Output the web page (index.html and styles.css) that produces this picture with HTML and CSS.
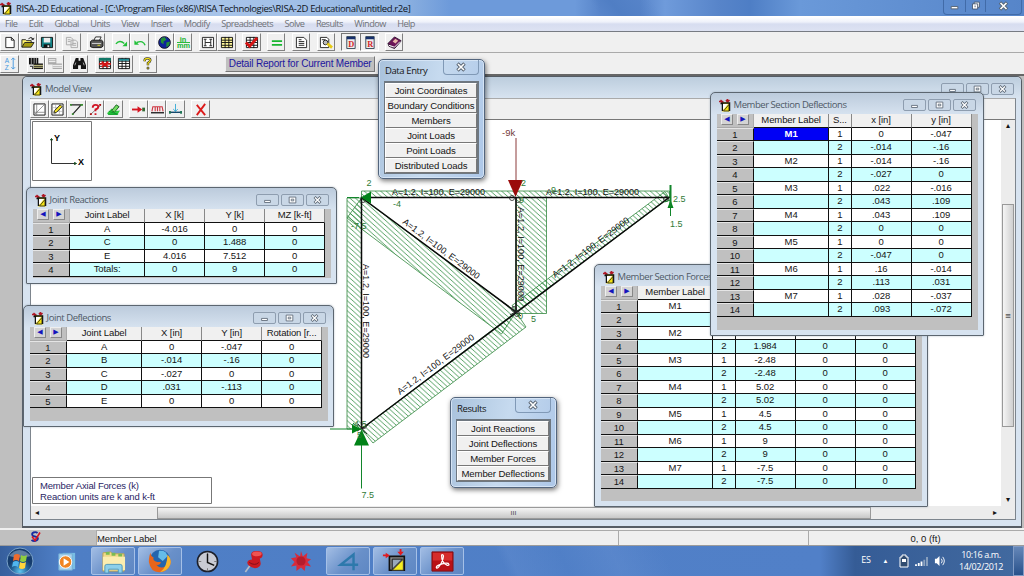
FILE: index.html
```html
<!DOCTYPE html>
<html lang="en">
<head>
<meta charset="utf-8">
<title>RISA-2D Educational</title>
<link rel="stylesheet" href="styles.css">
</head>
<body>
<svg class="defs" width="0" height="0">
  <symbol id="app" viewBox="0 0 12 13"><path d="M0 2.500h3M8.500 0v3M1.500 1l2.500 2-2 1M7 1l1.500 2 2-2" stroke="#b01826" stroke-width="1.500" fill="none"/><path d="M3 3.500h8v9H3z" fill="#ffe92a"/><path d="M3.500 12V4h7v8M1.500 4.500h2" stroke="#111" stroke-width="1.500" fill="none"/><path d="M4 5h5l-5 6z" fill="#fff"/><path d="M4.500 12L10 5.500V12z" fill="#f4e312" stroke="#222" stroke-width=".8"/></symbol>
  <symbol id="min" viewBox="0 0 22 12"><path d="M7.500 6.500h7v2.500h-7z" fill="#fff" stroke="#596573"/></symbol>
  <symbol id="max" viewBox="0 0 22 12"><path d="M7 2.500h8v7H7z" fill="#fff" stroke="#596573"/><path d="M9.500 5h3v2h-3z" fill="none" stroke="#596573"/></symbol>
  <symbol id="close" viewBox="0 0 22 12"><path d="M7.500 2.500l7 7M14.500 2.500l-7 7" stroke="#596573" stroke-width="3.400"/><path d="M8 3l6 6M14 3L8 9" stroke="#fff" stroke-width="1.600"/></symbol>
  <symbol id="doc" viewBox="0 0 16 14"><path d="M4 1.500h6l3 3v8H4z" fill="#fff" stroke="#222"/><path d="M10 1.500v3h3" fill="none" stroke="#222"/></symbol>
  <symbol id="grid" viewBox="0 0 16 14"><path d="M2.500 1.500h12v11h-12z" fill="#fff" stroke="#111"/><path d="M2.500 4.500h12M2.500 7h12M2.500 10h12M6.500 1v12M10.500 1v12" stroke="#111"/></symbol>
</svg>

<header class="titlebar">
  <svg class="app-icon" width="12" height="13"><use href="#app"/></svg>
  <span class="title-text">RISA-2D Educational - [C:\Program Files (x86)\RISA Technologies\RISA-2D Educational\untitled.r2e]</span>
  <div class="main-controls"><svg><use href="#min"/></svg><svg viewBox="0 0 22 12"><path d="M9.500 1.500h6v6h-6z" fill="#fff" stroke="#42536b"/><path d="M7.500 3.500h6v6h-6z" fill="#fff" stroke="#42536b"/><path d="M10 5.500h1v2h-1z" fill="#42536b"/></svg><svg class="wide"><use href="#close"/></svg></div>
</header>
<nav class="menubar"><span>File</span><span>Edit</span><span>Global</span><span>Units</span><span>View</span><span>Insert</span><span>Modify</span><span>Spreadsheets</span><span>Solve</span><span>Results</span><span>Window</span><span>Help</span></nav>

<div class="toolbar">
  <div class="group">
    <button><svg><use href="#doc"/></svg></button>
    <button><svg viewBox="0 0 16 14"><path d="M2 12V4h4l1 1h5v3" fill="#fff36a" stroke="#222"/><path d="M2 12l3-5h10l-3 5z" fill="#a59a10" stroke="#222"/><path d="M9 3q3-3 5 0l0 1m-2-1l2 1 1-2" fill="none" stroke="#222"/></svg></button>
    <button><svg viewBox="0 0 16 14"><path d="M2.500 1.500h12v11h-11l-1-1z" fill="#138084" stroke="#111"/><path d="M5 2h7v5H5z" fill="#eee"/><path d="M5 9h7v3.500H5z" fill="#111"/><path d="M9 10h2v2H9z" fill="#eee"/></svg></button>
  </div>
  <div class="group">
    <button><svg viewBox="0 0 16 14"><path d="M2.500 1.500h5l2 2v6h-7zM7.500 4.500h5l2 2v6h-7z" fill="#eee" stroke="#aaa"/><path d="M4 4h3M4 6h3M9 8h4M9 10h4" stroke="#aaa"/></svg></button>
  </div>
  <div class="group">
    <button><svg viewBox="0 0 16 14"><path d="M5 5l2-4h6l-2 4" fill="#fff" stroke="#222"/><path d="M1.500 6l2-1.500h10l1.500 1.500v5l-2 1.500h-9l-2.500-1z" fill="#555" stroke="#111"/><path d="M3 8h10" stroke="#ddd"/><path d="M9 10h3" stroke="#e4de22"/></svg></button>
  </div>
  <div class="group">
    <button><svg viewBox="0 0 16 14"><path d="M2 8.500q4-5 9-.5" fill="none" stroke="#21c038" stroke-width="1.500"/><path d="M14 6v5H9z" fill="#21c038"/></svg></button>
    <button><svg viewBox="0 0 16 14"><path d="M14 10Q12 4 5 7" fill="none" stroke="#21c038" stroke-width="1.500"/><path d="M2.500 4.500v5h5z" fill="#21c038"/></svg></button>
  </div>
  <div class="group">
    <button><svg viewBox="0 0 16 14"><circle cx="8" cy="7" r="6.300" fill="#10249c" stroke="#112"/><path d="M4 3l4-2 2 3-3 2v3l-3-2zM10 7l4-1-1 4-3 2z" fill="#249136"/></svg></button>
    <button><svg viewBox="0 0 16 14"><text x="4" y="6" font-size="8" class="green-type">in</text><path d="M1 7h14" stroke="#18b530"/><text x="1" y="13" font-size="8" class="green-type" textLength="14">mm</text></svg></button>
  </div>
  <div class="group">
    <button><svg viewBox="0 0 16 14"><path d="M2.500 1.500h12v11h-12zM5.500 3.500v7M11.500 3.500v7M5.500 7h6" fill="#fff" stroke="#222"/><path d="M4 3.500h3M10 3.500h3M4 10.500h3M10 10.500h3" stroke="#222"/></svg></button>
    <button><svg viewBox="0 0 16 14"><path d="M2.500 1.500h12v11h-12z" fill="#fff79a"/><path d="M2.500 1.500h12v11h-12zM2.500 4.500h12M2.500 7h12M2.500 10h12M6.500 1v12M10.500 1v12" fill="none" stroke="#111"/></svg></button>
  </div>
  <div class="group">
    <button><svg viewBox="0 0 16 14"><use href="#grid"/><path d="M2 7l4 4 8-9" fill="none" stroke="#d81414" stroke-width="3"/></svg></button>
  </div>
  <div class="group">
    <button><svg viewBox="0 0 16 14"><path d="M3 5.500h11M3 9.500h11" stroke="#18b530" stroke-width="2"/></svg></button>
  </div>
  <div class="group">
    <button><svg viewBox="0 0 16 14"><path d="M2.500 1.500h8l3 3v8h-11z" fill="#fff" stroke="#222"/><path d="M5 4h3M5 6h6M5 8h6M5 10h6" stroke="#222"/></svg></button>
  </div>
  <div class="group">
    <button><svg viewBox="0 0 16 14"><path d="M2.500 1.500h7l2 2v9h-9z" fill="#fff" stroke="#222"/><circle cx="8" cy="7" r="2.500" fill="#bbb" stroke="#222"/><path d="M10 8l5 4.500" stroke="#e6cb14" stroke-width="3"/><path d="M4 4h4" stroke="#222"/></svg></button>
  </div>
  <div class="group">
    <button class="pressed"><svg viewBox="0 0 16 14"><path d="M4 .500h9v13H4z" fill="#eee" stroke="#345"/><path d="M4 1h9v2.500H4z" fill="#17306c"/><text x="5.500" y="12" class="red-type">D</text></svg></button>
    <button class="pressed"><svg viewBox="0 0 16 14"><path d="M4 .500h9v13H4z" fill="#eee" stroke="#345"/><path d="M4 1h9v2.500H4z" fill="#17306c"/><text x="5.500" y="12" class="red-type">R</text></svg></button>
  </div>
  <div class="group">
    <button><svg viewBox="0 0 16 14"><path d="M1 8l7-7 7 4-7 8z" fill="#6b1557" stroke="#301030"/><path d="M1 8l1 3 6 2.500 7-8" fill="none" stroke="#301030"/><path d="M2 10l6 2 6-6" fill="none" stroke="#fff"/><path d="M6 6l3-3 3 2-3 3z" fill="#e8b7a8"/></svg></button>
  </div>
</div>
<div class="toolbar second">
  <div class="group first">
    <button><svg viewBox="0 0 16 14"><g class="blue-type"><text x="3" y="6">A</text><text x="3" y="14">Z</text></g><path d="M12 1v12M10 3l2-2 2 2M10 11l2 2 2-2" fill="none" stroke="#4598df"/></svg></button>
  </div>
  <div class="group">
    <button><svg viewBox="0 0 16 14"><path d="M1 1h10v7H1z" fill="#111"/><path d="M3.500 1v7M6.500 1v7M9 1v7" stroke="#ddd" stroke-width=".7"/><path d="M6 7h10v6H6z" fill="#111"/><path d="M6 9h10M6 11h10" stroke="#e8e49a"/><path d="M2 10h3v3" fill="none" stroke="#111"/></svg></button>
    <button><svg viewBox="0 0 16 14"><path d="M1 1h9v7H1zM6 7h10v6H6z" fill="#aaa"/><path d="M2 3h7M2 5h7M6 9h10M6 11h10" stroke="#fff"/></svg></button>
  </div>
  <div class="group">
    <button><svg viewBox="0 0 16 14"><path d="M4 1h3v3h2V1h3l3 8v4H9.500V9h-3v4H1V9z" fill="#151515"/><path d="M4 6l-1 3M12 6l1 3" stroke="#aaa"/></svg></button>
  </div>
  <div class="group wider">
    <button><svg viewBox="0 0 16 14"><use href="#grid"/><path d="M2 1h13v3H2z" fill="#176"/><path d="M2 7.500h13M5 5l7 6M12 5l-7 6" stroke="#d71414" stroke-width="1.800"/></svg></button>
    <button><svg viewBox="0 0 16 14"><use href="#grid"/><path d="M3 2h11v2H3z" fill="#188b94"/></svg></button>
  </div>
  <div class="group">
    <button><svg viewBox="0 0 16 14"><path d="M5 4.500V3.500q0-2 3-2t3 2q0 1.500-2.500 3V9" fill="none" stroke="#222" stroke-width="2.600"/><path d="M5 4.500V3.500q0-2 3-2t3 2q0 1.500-2.500 3V9" fill="none" stroke="#f0dd16" stroke-width="1.400"/><path d="M7.500 11h2v2h-2z" fill="#f0dd16" stroke="#222" stroke-width=".7"/></svg></button>
  </div>
  <button class="report">Detail Report for Current Member</button>
</div>

<main class="workspace">
  <section class="model">
    <div class="win-title model-title"><svg class="app-icon" width="12" height="13"><use href="#app"/></svg><span>Model View</span><div class="controls"><svg><use href="#min"/></svg><svg><use href="#max"/></svg><svg><use href="#close"/></svg></div></div>
    <div class="model-body">
      <div class="toolbar model-tools">
        <div class="group first">
          <button><svg viewBox="0 0 16 14"><path d="M2 1h12v12H2z" fill="#fff" stroke="#111"/><path d="M2 13L14 1M5 1v12M2 10h12" stroke="#777" stroke-width=".8"/></svg></button>
          <button><svg viewBox="0 0 16 14"><path d="M2 1h12v12H2z" fill="#fff" stroke="#111"/><path d="M2 5h12M2 9h12M6 1v12M10 1v12" stroke="#999" stroke-width=".6"/><path d="M4 11l1-3 6-6 2 2-6 6z" fill="#f5e223" stroke="#222"/></svg></button>
          <button><svg viewBox="0 0 16 14"><path d="M2 2h11L4 12" fill="none" stroke="#222" stroke-width="1.300"/><path d="M1 1h2v2H1zM12 1h3v2h-3zM3 11h2v2H3z" fill="#3b8c31"/></svg></button>
          <button><svg viewBox="0 0 16 14"><path d="M3 12L14 2" stroke="#777"/><path d="M5 5q0-3 3-3t3 2q0 2-3 3v2M8 11v2" fill="none" stroke="#d11525" stroke-width="2"/><path d="M2 11h2v2H2zM12 1h2v2h-2z" fill="#a11"/></svg></button>
          <button><svg viewBox="0 0 16 14"><path d="M1 11l5-5 3 3 6-1-3 5H3z" fill="#2ecc40"/><path d="M6 8l5-6 3 2-5 6z" fill="#72dc60" stroke="#185d22"/><path d="M2 12h11M3 9l9 3" stroke="#0d9428"/></svg></button>
        </div>
        <div class="group">
          <button><svg viewBox="0 0 16 14"><path d="M1 7h9" stroke="#d61420" stroke-width="2"/><path d="M7 3.500l5 3.500-5 3.500z" fill="#d61420"/><path d="M12 5h3v4h-3z" fill="#356b35"/></svg></button>
          <button><svg viewBox="0 0 16 14"><path d="M2 9l1-5h10l1 5M5.500 4v5M8 4v5M10.500 4v5" fill="none" stroke="#ce3541" stroke-width="1.200"/><path d="M1 10.500h14" stroke="#222" stroke-width="1.500"/></svg></button>
          <button><svg viewBox="0 0 16 14"><path d="M8 1v8M5.500 6.500L8 9l2.500-2.500" stroke="#38abd5" fill="none"/><path d="M1 10h14" stroke="#15496d" stroke-width="1.500"/><path d="M1 8.500h2v3H1zM13 8.500h2v3h-2z" fill="#275"/></svg></button>
        </div>
        <div class="group">
          <button><svg viewBox="0 0 16 14"><path d="M4 2l9 11M13 1L4 13" stroke="#dc1b1b" stroke-width="2"/></svg></button>
        </div>
      </div>
      <div class="view">
        <svg class="canvas" width="970" height="386" viewBox="31 120 970 386">
          <defs><pattern id="hatch" width="5.500" height="5" patternUnits="userSpaceOnUse"><path d="M-1-.91L6.500 5.910M-1 4.090L1 5.910M4.500-.91L6.500.910" stroke="#248736" stroke-width=".75"/></pattern></defs>
          <path class="legend-box" d="M32.500 121.500h59v59h-59z"/>
          <path d="M51.500 140v23.500H75" fill="none" stroke="#333"/><path d="M50.500 140l1-1.500 1 1.500zM74.500 162.500l2 1-2 1z" fill="#164a20" stroke="#164a20"/>
          <text x="54" y="141" class="axis">Y</text><text x="78" y="165" class="axis">X</text>
          <g class="force">
            <path d="M347 198h14.500v231H347z"/>
            <path d="M361.500 191h308v6.500h-308z"/>
            <path d="M516 197.500h30.500v116H516z"/>
            <path d="M361.500 198L516 312l-14.500 22L347 218z"/>
            <path d="M361.500 429L516 312l10 15L373 443z"/>
            <path d="M516 312l153-114-4-6.500-153 114z"/>
          </g>
          <g class="members"><path d="M361.500 429V197.500H669L361.500 429M361.500 197.500L516 312V197.500"/></g>
          <g class="joints"><circle cx="363" cy="200" r="2.500"/><circle cx="512" cy="198" r="2.500"/><circle cx="518" cy="200" r="2.500"/><circle cx="514" cy="309" r="2.500"/><circle cx="517" cy="314" r="2.500"/><circle cx="666" cy="199" r="2.500"/><circle cx="364" cy="426" r="2.500"/></g>
          <path d="M511 308l10 8M510 315l11-6M358 424l9 10M357 431l11-6" stroke="#222" fill="none"/>
          <g class="loads"><path d="M371 191.500v12l-10-6zM354 445.500h15l-7.500-16zM352 424.500v9l9-4.500z"/><path d="M347 197.500h12M361.500 445v43.500M330 429h23M670.500 185v31M670.500 200l-6 2M353 423l12 10" fill="none" stroke="#12852b"/><path d="M670.500 200l-3 8h6z"/><path d="M670.500 185v22" stroke="#12852b" stroke-width="2"/></g>
          <path d="M516 138v45" stroke="#8b3b3b"/><path d="M508 180h15l-7.500 17z" fill="#9b0b0b"/>
          <text x="502" y="135.500" class="load-label">-9k</text>
          <g class="value"><text x="366.500" y="186">2</text><text x="393" y="206.500">-4</text><text x="351" y="229">-7.5</text><text x="521" y="186">2</text><text x="551" y="193">9</text><text x="519" y="203">9</text><text x="673" y="202">2.5</text><text x="670" y="227">1.5</text><text x="531" y="322">5</text><text x="518" y="319">0</text><text x="351" y="427">-4.5</text><text x="357" y="438">5</text><text x="361.500" y="498">7.5</text></g>
          <g class="member-label">
            <text x="392" y="195" textLength="93">A=1.2, I=100, E=29000</text><text x="546" y="195" textLength="93">A=1.2, I=100, E=29000</text>
            <text transform="translate(363 264) rotate(90)" textLength="94">A=1.2, I=100, E=29000</text>
            <text transform="translate(518 207) rotate(90)" textLength="94">A=1.2, I=100, E=29000</text>
            <text transform="translate(402 223) rotate(37)" textLength="94">A=1.2, I=100, E=29000</text>
            <text transform="translate(400 395) rotate(-37)" textLength="94">A=1.2, I=100, E=29000</text>
            <text transform="translate(555 278) rotate(-37)" textLength="94">A=1.2, I=100, E=29000</text>
          </g>
          <path class="legend-box" d="M32.500 477.500h179v26h-179z"/>
          <g class="legend"><text x="40" y="489" textLength="99">Member Axial Forces (k)</text><text x="40" y="500" textLength="115">Reaction units are k and k-ft</text></g>
        </svg>
        <div class="vscroll"><i>▴</i><div class="vthumb">≡</div><i>▾</i></div>
        <div class="hscroll"><i>◂</i><div class="hthumb">ııı</div><i>▸</i></div>
        <div class="grip"></div>
      </div>
    </div>
  </section>
</main>

<footer class="status"><div class="status-icon"><svg width="12" height="13" viewBox="0 0 12 13"><path d="M8.500 3Q7 1.500 4.500 2.500T4 6l4 1q2 2-.5 3.500T2.500 10" fill="none" stroke="#182ba0" stroke-width="1.900"/><path d="M3 6.500l3 4 5-8" fill="none" stroke="#d71425" stroke-width="1.600"/></svg></div><div class="hint">Member Label</div><div class="blank"></div><div class="coords">0, 0 (ft)</div></footer>

<div class="taskbar">
  <div class="start"><svg width="30" height="30" viewBox="0 0 30 30"><defs><radialGradient id="orb" cy=".9"><stop stop-color="#5fc5ef"/><stop offset=".6" stop-color="#24669c"/><stop offset="1" stop-color="#153c6d"/></radialGradient></defs><circle cx="15" cy="15" r="13" fill="url(#orb)" stroke="#7ba3ca"/><path d="M4 10Q14-2 26 10Q15 13 4 10" fill="#cddff0" opacity=".4"/><path d="M9 9q3-2 6 0l-1 6q-3-2-6 0z" fill="#ef6b2d"/><path d="M16 9q3 2 6 0l-1 6q-3 2-6 0z" fill="#8fce40"/><path d="M8 16q3-2 6 0l-1 5q-3-2-6 0z" fill="#50b5ef"/><path d="M15 16q3 2 6 0l-1 6q-3 2-6 0z" fill="#ffd53c"/></svg></div>
  <div class="task"><svg width="23" height="23" viewBox="0 0 24 24"><path d="M8 3h13v17H8z" fill="#78bde4"/><path d="M4 4h14v17H4z" fill="#a9d3ee" stroke="#70acd5"/><circle cx="11" cy="12.500" r="6.500" fill="#f08422" stroke="#fff"/><path d="M9 8.500v8l6-4z" fill="#fff"/></svg></div>
  <div class="task open"><svg width="27" height="25" viewBox="0 0 28 26"><path d="M3 4l8-1 2 2h12v18H3z" fill="#f1d988" stroke="#b8a35a"/><path d="M6 3h4v3H6zM12 4h4v3h-4zM19 5h4v3h-4z" fill="#7abb52"/><path d="M3 8h23v14H3z" fill="#fbedb0"/><path d="M5 25v-7q0-2 2-2h14q2 0 2 2v7h-4v-4H9v4z" fill="#8dd0ea" stroke="#4e99bd"/></svg></div>
  <div class="task open"><svg width="26" height="26" viewBox="0 0 28 28"><circle cx="14" cy="13" r="11" fill="#2465ae"/><path d="M13 3q8-1 9 6l-5 5-5-4z" fill="#65bce8"/><path d="M4 5q0 4 3 5-1 4 4 5h4q-1 4-5 3 4 5 10 2 5-4 2-12 5 5 3 10-3 8-12 8T2 15Q2 8 4 5" fill="#e7651c"/><path d="M22 7q5 5 3 11-3 7-11 8 8-5 8-19" fill="#f7b62c"/></svg></div>
  <div class="task"><svg width="25" height="25" viewBox="0 0 26 26"><circle cx="13" cy="13" r="10.500" fill="#c9cbd3" stroke="#1c1f29" stroke-width="1.600"/><path d="M13 3.500v3M13 20v3M3.500 13h3M20 13h3" stroke="#777"/><path d="M13 5v9l7 3" fill="none" stroke="#111" stroke-width="1.500"/></svg></div>
  <div class="task"><svg width="24" height="25" viewBox="0 0 24 26"><path d="M8 17L3 24" stroke="#b5bcc8" stroke-width="1.700"/><path d="M9 6Q9 2 15 2t6 4q0 3-3 4l1 5q0 4-6 5Q5 18 5 14q1-3 5-3z" fill="#cb1a22"/><ellipse cx="15" cy="5" rx="5" ry="2.500" fill="#ee5452"/><path d="M7 14q6 4 10 0" fill="none" stroke="#7e1019"/></svg></div>
  <div class="task"><svg width="22" height="22" viewBox="0 0 24 24"><path d="M12 1l2 6 5-4-1 6 5 1-4 3 4 5-6-1-1 6-4-4-5 4v-6l-6 1 4-5-4-4 6-1-2-5 6 4z" fill="#d82b3b"/><circle cx="12" cy="12" r="5" fill="#b51c2c"/></svg></div>
  <div class="task open"><svg width="26" height="24" viewBox="0 0 28 26"><path d="M25 17H6L20 6v17" fill="none" stroke="#2d79ac" stroke-width="2.600"/></svg></div>
  <div class="task open"><svg width="26" height="26" viewBox="0 0 28 28"><path d="M8 9h16v15H8z" fill="#888" stroke="#111" stroke-width="1.800"/><path d="M11 12h11L11 23z" fill="#9aa9bb" stroke="#111"/><path d="M11 24L23 12v12z" fill="#f7ee20" stroke="#333"/><path d="M1 8h5M20 1v4" stroke="#e01b20" stroke-width="2"/><path d="M4 5l4.500 3L4 11zM16.500 4h7L20 8z" fill="#e01b20"/></svg></div>
  <div class="task open"><svg width="23" height="23" viewBox="0 0 24 24"><path d="M1 2h22v20H1z" fill="#b91116" stroke="#7d1014"/><path d="M2 3h20v8H2z" fill="#d52c2c"/><path d="M11 5q4-1 0 8-3 6-5 6-2-2 4-4t8-1q2 2-1 2-6-2-6-11" fill="none" stroke="#fff" stroke-width="1.300"/></svg></div>
  <div class="tray"><span class="lang">ES</span><span class="up">▲</span>
    <svg width="10" height="14" viewBox="0 0 10 14"><path d="M3 1h4v2h2v10H1V3h2z" fill="#304c70" stroke="#fff"/><path d="M3 5h4v3H3z" fill="#fff"/></svg>
    <svg width="13" height="11" viewBox="0 0 14 12"><path d="M1 11V9M4 11V7.500M7 11V6" stroke="#fff" stroke-width="2"/><path d="M10 11V4M13 11V1" stroke="#8ea4c0" stroke-width="2"/></svg>
    <svg width="11" height="12" viewBox="0 0 12 13"><path d="M1 4h2l3-3v11L3 9H1z" fill="#fff"/><path d="M8 4q2 2.500 0 5M9.500 2q3.500 4.500 0 9" fill="none" stroke="#fff"/></svg>
    <div class="clock">10:16 a.m.<br>14/02/2012</div><div class="peek"></div>
  </div>
</div>

<section class="window forces">
  <div class="win-title"><svg class="app-icon" width="12" height="13"><use href="#app"/></svg><span>Member Section Forces</span></div>
  <div class="sheet"><table>
    <colgroup><col class="c-num"><col class="c-label"><col class="c-sec"><col class="c-val"><col class="c-val"><col class="c-val"></colgroup>
    <tr><th class="arrows"><b>◀</b><b>▶</b></th><th>Member Label</th><th></th><th></th><th></th><th></th></tr>
    <tr><td>1</td><td>M1</td><td></td><td></td><td></td><td></td></tr>
    <tr><td>2</td><td></td><td></td><td></td><td></td><td></td></tr>
    <tr><td>3</td><td>M2</td><td></td><td></td><td></td><td></td></tr>
    <tr><td>4</td><td></td><td>2</td><td>1.984</td><td>0</td><td>0</td></tr>
    <tr><td>5</td><td>M3</td><td>1</td><td>-2.48</td><td>0</td><td>0</td></tr>
    <tr><td>6</td><td></td><td>2</td><td>-2.48</td><td>0</td><td>0</td></tr>
    <tr><td>7</td><td>M4</td><td>1</td><td>5.02</td><td>0</td><td>0</td></tr>
    <tr><td>8</td><td></td><td>2</td><td>5.02</td><td>0</td><td>0</td></tr>
    <tr><td>9</td><td>M5</td><td>1</td><td>4.5</td><td>0</td><td>0</td></tr>
    <tr><td>10</td><td></td><td>2</td><td>4.5</td><td>0</td><td>0</td></tr>
    <tr><td>11</td><td>M6</td><td>1</td><td>9</td><td>0</td><td>0</td></tr>
    <tr><td>12</td><td></td><td>2</td><td>9</td><td>0</td><td>0</td></tr>
    <tr><td>13</td><td>M7</td><td>1</td><td>-7.5</td><td>0</td><td>0</td></tr>
    <tr><td>14</td><td></td><td>2</td><td>-7.5</td><td>0</td><td>0</td></tr>
  </table></div>
</section>

<section class="window deflections">
  <div class="win-title"><svg class="app-icon" width="12" height="13"><use href="#app"/></svg><span>Member Section Deflections</span><div class="controls"><svg><use href="#min"/></svg><svg><use href="#max"/></svg><svg><use href="#close"/></svg></div></div>
  <div class="sheet"><table>
    <colgroup><col class="c-num"><col class="c-label"><col class="c-sec"><col class="c-val"><col class="c-val"></colgroup>
    <tr><th class="arrows"><b>◀</b><b>▶</b></th><th>Member Label</th><th>S...</th><th>x [in]</th><th>y [in]</th></tr>
    <tr><td>1</td><td class="selected">M1</td><td>1</td><td>0</td><td>-.047</td></tr>
    <tr><td>2</td><td></td><td>2</td><td>-.014</td><td>-.16</td></tr>
    <tr><td>3</td><td>M2</td><td>1</td><td>-.014</td><td>-.16</td></tr>
    <tr><td>4</td><td></td><td>2</td><td>-.027</td><td>0</td></tr>
    <tr><td>5</td><td>M3</td><td>1</td><td>.022</td><td>-.016</td></tr>
    <tr><td>6</td><td></td><td>2</td><td>.043</td><td>.109</td></tr>
    <tr><td>7</td><td>M4</td><td>1</td><td>.043</td><td>.109</td></tr>
    <tr><td>8</td><td></td><td>2</td><td>0</td><td>0</td></tr>
    <tr><td>9</td><td>M5</td><td>1</td><td>0</td><td>0</td></tr>
    <tr><td>10</td><td></td><td>2</td><td>-.047</td><td>0</td></tr>
    <tr><td>11</td><td>M6</td><td>1</td><td>.16</td><td>-.014</td></tr>
    <tr><td>12</td><td></td><td>2</td><td>.113</td><td>.031</td></tr>
    <tr><td>13</td><td>M7</td><td>1</td><td>.028</td><td>-.037</td></tr>
    <tr><td>14</td><td></td><td>2</td><td>.093</td><td>-.072</td></tr>
  </table></div>
</section>

<section class="window reactions">
  <div class="win-title"><svg class="app-icon" width="12" height="13"><use href="#app"/></svg><span>Joint Reactions</span><div class="controls"><svg><use href="#min"/></svg><svg><use href="#max"/></svg><svg><use href="#close"/></svg></div></div>
  <div class="sheet"><table>
    <colgroup><col class="c-num"><col class="c-label"><col class="c-val"><col class="c-val"><col class="c-val"></colgroup>
    <tr><th class="arrows"><b>◀</b><b>▶</b></th><th>Joint Label</th><th>X [k]</th><th>Y [k]</th><th>MZ [k-ft]</th></tr>
    <tr><td>1</td><td>A</td><td>-4.016</td><td>0</td><td>0</td></tr>
    <tr><td>2</td><td>C</td><td>0</td><td>1.488</td><td>0</td></tr>
    <tr><td>3</td><td>E</td><td>4.016</td><td>7.512</td><td>0</td></tr>
    <tr><td>4</td><td>Totals:</td><td>0</td><td>9</td><td>0</td></tr>
  </table></div>
</section>

<section class="window joint-deflections">
  <div class="win-title"><svg class="app-icon" width="12" height="13"><use href="#app"/></svg><span>Joint Deflections</span><div class="controls"><svg><use href="#min"/></svg><svg><use href="#max"/></svg><svg><use href="#close"/></svg></div></div>
  <div class="sheet"><table>
    <colgroup><col class="c-num"><col class="c-label"><col class="c-val"><col class="c-val"><col class="c-val"></colgroup>
    <tr><th class="arrows"><b>◀</b><b>▶</b></th><th>Joint Label</th><th>X [in]</th><th>Y [in]</th><th>Rotation [r...</th></tr>
    <tr><td>1</td><td>A</td><td>0</td><td>-.047</td><td>0</td></tr>
    <tr><td>2</td><td>B</td><td>-.014</td><td>-.16</td><td>0</td></tr>
    <tr><td>3</td><td>C</td><td>-.027</td><td>0</td><td>0</td></tr>
    <tr><td>4</td><td>D</td><td>.031</td><td>-.113</td><td>0</td></tr>
    <tr><td>5</td><td>E</td><td>0</td><td>0</td><td>0</td></tr>
  </table></div>
</section>

<aside class="palette data-entry">
  <div class="palette-title"><span>Data Entry</span><div class="palette-close"><svg width="22" height="12"><use href="#close"/></svg></div></div>
  <div class="choices"><button>Joint Coordinates</button><button>Boundary Conditions</button><button>Members</button><button>Joint Loads</button><button>Point Loads</button><button>Distributed Loads</button></div>
</aside>
<aside class="palette results">
  <div class="palette-title"><span>Results</span><div class="palette-close"><svg width="22" height="12"><use href="#close"/></svg></div></div>
  <div class="choices"><button>Joint Reactions</button><button>Joint Deflections</button><button>Member Forces</button><button>Member Deflections</button></div>
</aside>
</body>
</html>
```
FILE: styles.css
```css
* { box-sizing: border-box; }
body { margin: 0; width: 1024px; height: 576px; overflow: hidden; position: relative; display: flex; flex-direction: column; background: #f0f0f0; color: #151515; font: 9.5px/12px "Liberation Sans", sans-serif; }
button { font: inherit; color: inherit; padding: 0; margin: 0; }
.defs { position: absolute; }
.app-icon { flex: none; width: 12px; height: 13px; }

.titlebar { height: 16px; flex: none; display: flex; align-items: center; gap: 4px; background: linear-gradient(50deg, transparent 58%, #3f70b855 60%, transparent 64%), linear-gradient(90deg, #b5cdec 0, #a3c1e8 280px, #8fb3e1 400px, #6d9ada 450px, #6d9ada 575px, #5885ca 600px, #5885ca 640px, #6f9bdb 665px, #5784c9 720px, #4e7ec5 750px, #6a99d9 800px, #5685c9 1024px); }
.title-text { font: 9.5px/15px "Open Sans", sans-serif; letter-spacing: -.38px; white-space: nowrap; color: #10151c; }
.main-controls { display: flex; align-self: flex-start; margin-left: auto; margin-right: 2px; height: 15px; border: 1px solid #416ba8; border-top: 0; border-radius: 0 0 4px 4px; }
.main-controls svg { width: 21px; height: 12px; }
.main-controls svg:nth-child(2) { border: 0 solid #416ba8; border-width: 0 1px; }
.main-controls .wide { width: 35px; }
.menubar { height: 16px; flex: none; display: flex; gap: 11.5px; padding-left: 5px; border-top: 1px solid #fff; border-bottom: 1px solid #777b83; background: linear-gradient(#fff, #eef1fa 5px, #d7ddf0 7px, #dde2f2); color: #6f7277; font: 9.200px/14px "Open Sans", sans-serif; letter-spacing: -.55px; }

.toolbar { height: 21px; flex: none; display: flex; align-items: center; gap: 6.250px; background: #f0f0f0; border-bottom: 1px solid #aaa; }
.toolbar.second { height: 23px; border-bottom: 2px solid #666; gap: 6px; }
.group { display: flex; }
.group.wider { margin-left: 1px; }
.second .group.first { margin-right: 2px; }
.group button { width: 18.600px; height: 18px; border: 1px solid; border-color: #fff #808080 #808080 #fff; background: #f0f0f0; display: grid; place-items: center; }
.group button.pressed { border-color: #777 #fff #fff #777; }
.group svg { width: 15px; height: 13px; display: block; }
.green-type { fill: #18b530; font-weight: bold; }
.red-type { fill: #d12626; font: bold 9px "Liberation Serif", serif; }
.blue-type { fill: #4598df; font: 7px "Liberation Sans", sans-serif; }
.report { height: 16px; width: 150px; margin-left: 62px; border: 1px solid; border-color: #eee #777 #777 #eee; background: #c0c0c0; color: #1c169e; font-size: 10px; line-height: 13px; letter-spacing: -.18px; white-space: nowrap; }

.workspace { flex: none; height: 452px; background: #bfbfbf; padding-left: 22px; padding-right: 2px; }
.model { height: 452px; border: 1px solid #555c64; border-bottom-width: 2px; border-radius: 5px 5px 0 0; background: #d7e3f0; padding: 0 5px 5px 7px; }
.win-title { height: 21px; display: flex; align-items: center; gap: 3px; padding: 3px 2px 0 2px; color: #4e5966; font: 9.5px/14px "Open Sans", sans-serif; letter-spacing: -.45px; white-space: nowrap; }
.model-title { margin: 0 -5px 0 -7px; padding-left: 7px; padding-right: 7px; background: linear-gradient(#bccddd, #d7e3f0); border-radius: 5px 5px 0 0; }
.controls { margin-left: auto; display: flex; gap: 2px; }
.controls svg { width: 23px; height: 12px; border: 1px solid #8e9daf; border-radius: 2px; background: #c9d7e6; }
.model-body { border: 1px solid #7d858d; height: 422px; display: flex; flex-direction: column; border-top-color: #aaa; }
.model-tools { height: 21px; border-bottom-color: #777; margin-left: -1px; }
.view { flex: 1; min-height: 0; display: grid; grid-template-columns: 970px 1fr; grid-template-rows: 386px 1fr; background: #fff; }
.canvas { display: block; }
.vscroll { display: flex; flex-direction: column; align-items: center; justify-content: space-between; background: #ececec; }
.vscroll i, .hscroll i { font: normal 8px/12px "DejaVu Sans", sans-serif; width: 12px; text-align: center; }
.vthumb { width: 12px; height: 223px; margin-bottom: -5px; border: 1px solid #999; background: linear-gradient(90deg, #f5f5f5, #d0d0d0); text-align: center; line-height: 221px; color: #555; }
.hscroll { display: flex; align-items: center; justify-content: space-between; background: #ececec; }
.hthumb { height: 12px; width: 714px; margin-left: -5px; border: 1px solid #999; background: linear-gradient(#f5f5f5, #c8c8c8); text-align: center; line-height: 9px; font-size: 7px; color: #444; }
.grip { background: #ececec; }

.legend-box { fill: #fff; stroke: #777; }
.axis { font: bold 9px "Liberation Sans", sans-serif; }
.force path { fill: url(#hatch); stroke: #32883f; stroke-width: .8; }
.members { fill: none; stroke: #080808; stroke-width: 1.500; }
.joints { fill: none; stroke: #222; stroke-width: .8; }
.loads { fill: #008217; }
.load-label { fill: #743b3b; font-size: 9.5px; }
.value { fill: #307a36; font-size: 9px; }
.member-label { font-size: 9px; fill: #111; }
.legend { fill: #292564; font-size: 9.5px; }

.status { height: 18px; flex: none; display: flex; background: #efefef; border-top: 2px solid #f0f0f0; border-bottom: 1px solid #9b9b9b; font-size: 9.5px; line-height: 15px; }
.status > div { border-top: 1px solid #aaa; border-left: 1px solid #aaa; }
.status .status-icon { width: 96px; padding-left: 29px; background: #c0c0c0; border: 0; }
.status-icon svg { display: block; }
.hint { width: 522px; letter-spacing: -.1px; }
.blank { width: 190px; }
.coords { flex: 1; padding-left: 18px; text-align: center; }

.taskbar { height: 30px; flex: none; display: flex; align-items: center; gap: 3px; background: linear-gradient(65deg, transparent 49%, #6690d255 50%, transparent 55%, #6690d266 60%, transparent 65%, transparent), linear-gradient(90deg, #365f9d, #4e7ec5 60px, #5180c8 820px, #355c96 855px, #41699f 1015px); }
.start { width: 41px; padding-left: 5px; }
.start svg { display: block; }
.task { width: 44px; height: 28px; display: grid; place-items: center; }
.task.open { border: 1px solid #a5c0e7; border-radius: 2px; background: linear-gradient(135deg, #a2bde4, #6990c9 55%, #5e87c3); }
.tray { margin-left: auto; display: flex; align-items: center; color: #fff; height: 30px; gap: 6px; font: 9px/12px "Open Sans", sans-serif; letter-spacing: -.4px; }
.lang { margin-right: 6px; margin-top: -3px; }
.up { font-size: 6px; margin-right: 5px; }
.clock { width: 50px; margin-left: 5px; text-align: center; }
.peek { width: 11px; height: 30px; border: 1px solid #809bc5; background: linear-gradient(#6587b8, #28518b); margin-left: 1px; }

.window { position: absolute; border: 1px solid #5c6670; border-radius: 5px 5px 1px 1px; background: linear-gradient(#bccbdc, #d7e3f0 22px); padding: 0 5px 5px 5.600px; box-shadow: 0 0 2px #7899; }
.sheet { background: #c0c0c0; overflow: hidden; }
.deflections { left: 710px; top: 92px; width: 274px; height: 244px; }
.deflections .sheet { height: 216px; }
.forces { left: 594px; top: 264px; width: 334px; height: 243px; }
.forces .sheet { height: 215px; }
.reactions { left: 26px; top: 187px; width: 311px; height: 97px; }
.reactions .sheet { height: 69px; }
.joint-deflections { left: 23px; top: 305px; width: 311px; height: 122px; }
.joint-deflections .sheet { height: 94px; }
table { table-layout: fixed; width: min-content; border-collapse: separate; border-spacing: 0; font-size: 9.5px; line-height: 12.500px; text-align: center; letter-spacing: -.1px; }
.c-num { width: 37.500px; }
.c-label { width: 75px; }
.c-sec { width: 22.500px; }
.c-val { width: 60px; }
th, td { height: 13.500px; padding: 0; overflow: hidden; white-space: nowrap; border-right: 1px solid #111; border-bottom: 1px solid #111; background: #fff; }
th { font-weight: normal; background: #f0f0f0; border-right-color: #888; }
tr:nth-child(odd) td { background: #ccffff; }
tr td:first-child { background: #c0c0c0; border-top: 1px solid #e5e5e5; line-height: 11.500px; }
tr:nth-child(odd) td:first-child { background: #c0c0c0; }
th.arrows { background: #c0c0c0; border-color: #aaa; }
.arrows b { display: inline-block; width: 12px; height: 11px; margin: 0 2px; border: 1px solid; border-color: #eee #888 #888 #eee; background: #d4d4d4; color: #1414bd; font: 7px/9px "DejaVu Sans", sans-serif; vertical-align: top; }
td.selected { background: #0000f5; color: #fff; font-weight: bold; }

.palette { position: absolute; border: 1px solid #53657d; border-radius: 5px; padding: 0 5px 5px; background: linear-gradient(100deg, #a9c2dc, #c6daef 50%, #adc7e8); box-shadow: 1px 2px 5px #0008, inset 0 0 0 1px #d5e4f5; }
.data-entry { left: 378px; top: 59px; width: 107px; height: 120px; }
.results { left: 450px; top: 397px; width: 107px; height: 91px; }
.palette-title { height: 21px; display: flex; justify-content: space-between; font: 9.5px/22px "Open Sans", sans-serif; letter-spacing: -.4px; padding-left: 1px; }
.palette-close { width: 36px; height: 15px; display: grid; place-items: center; border: 1px solid #8099b6; border-top: 0; border-radius: 0 0 4px 4px; }
.choices { border: 2px solid #6e7780; border-left-width: 1px; border-bottom-width: 1px; background: #777; display: flex; flex-direction: column; }
.choices button { height: 15px; border: 1px solid; border-color: #fff #777 #777 #fff; background: #f0f0f0; font-size: 9.600px; line-height: 13px; letter-spacing: -.12px; white-space: nowrap; }
```
